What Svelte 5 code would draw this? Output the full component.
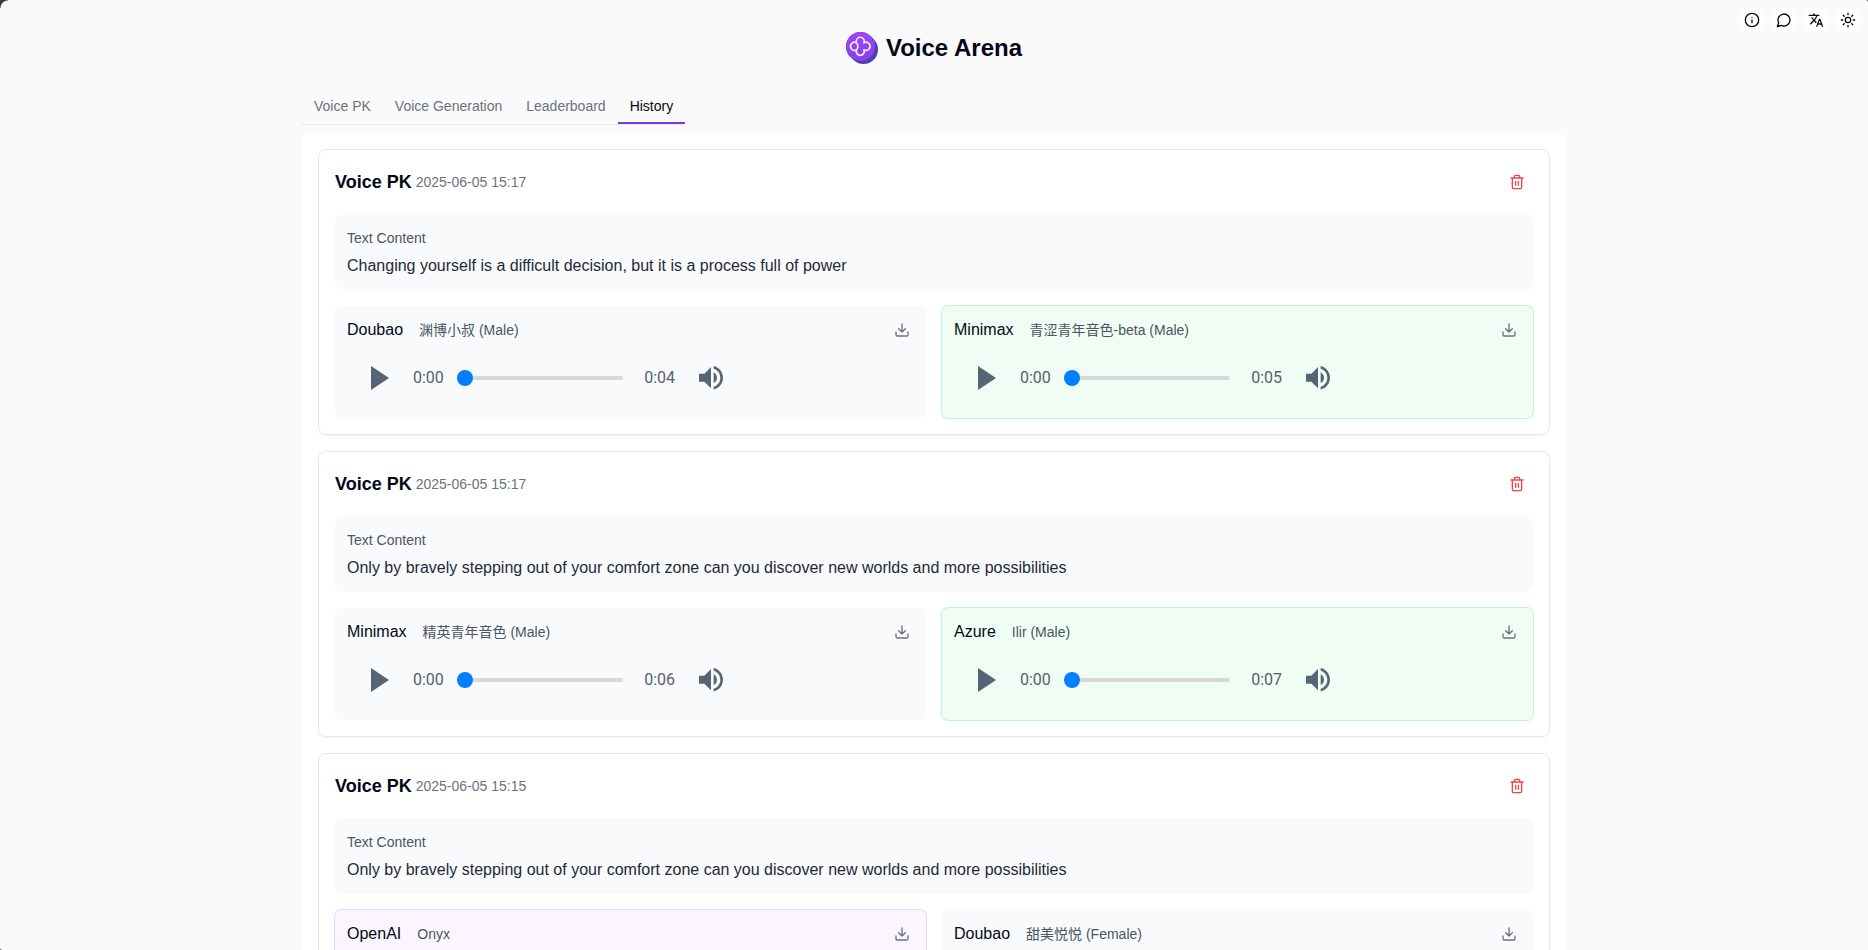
<script>
  const tabs = ['Voice PK', 'Voice Generation', 'Leaderboard', 'History'];
  let active = $state('History');

  const records = [
    {
      time: '2025-06-05 15:17',
      text: 'Changing yourself is a difficult decision, but it is a process full of power',
      voices: [
        { provider: 'Doubao', name: '渊博小叔 (Male)', length: '0:04', tone: '' },
        { provider: 'Minimax', name: '青涩青年音色-beta (Male)', length: '0:05', tone: 'green' }
      ]
    },
    {
      time: '2025-06-05 15:17',
      text: 'Only by bravely stepping out of your comfort zone can you discover new worlds and more possibilities',
      voices: [
        { provider: 'Minimax', name: '精英青年音色 (Male)', length: '0:06', tone: '' },
        { provider: 'Azure', name: 'Ilir (Male)', length: '0:07', tone: 'green' }
      ]
    },
    {
      time: '2025-06-05 15:15',
      text: 'Only by bravely stepping out of your comfort zone can you discover new worlds and more possibilities',
      voices: [
        { provider: 'OpenAI', name: 'Onyx', length: '0:06', tone: 'purple' },
        { provider: 'Doubao', name: '甜美悦悦 (Female)', length: '0:06', tone: '' }
      ]
    }
  ];
</script>

{#snippet icon(name)}
  <svg class="icon" viewBox="0 0 24 24" aria-hidden="true">
    {#if name === 'info'}
      <circle cx="12" cy="12" r="10" /><path d="M12 16v-4M12 8h.01" />
    {:else if name === 'chat'}
      <path d="M7.9 20A9 9 0 1 0 4 16.1L2 22Z" />
    {:else if name === 'language'}
      <path
        class="solid"
        d="M12.87 15.07l-2.54-2.51.03-.03A17.52 17.52 0 0 0 14.07 6H17V4h-7V2H8v2H1v2h11.17C11.5 7.92 10.44 9.75 9 11.35 8.07 10.32 7.3 9.19 6.69 8h-2c.73 1.63 1.73 3.17 2.98 4.56l-5.09 5.02L4 19l5-5 3.11 3.11.76-2.04zM18.5 10h-2L12 22h2l1.12-3h4.75L21 22h2l-4.5-12zm-2.62 7l1.62-4.33L19.12 17h-3.24z"
      />
    {:else if name === 'sun'}
      <circle cx="12" cy="12" r="4" />
      <path d="M12 2v2M12 20v2M4.93 4.93l1.41 1.41M17.66 17.66l1.41 1.41M2 12h2M20 12h2M6.34 17.66l-1.41 1.41M19.07 4.93l-1.41 1.41" />
    {:else if name === 'trash'}
      <path d="M3 6h18M19 6v14a2 2 0 0 1-2 2H7a2 2 0 0 1-2-2V6M8 6V4a2 2 0 0 1 2-2h4a2 2 0 0 1 2 2v2M10 11v6M14 11v6" />
    {:else if name === 'download'}
      <path d="M21 15v4a2 2 0 0 1-2 2H5a2 2 0 0 1-2-2v-4M7 10l5 5 5-5M12 15V3" />
    {/if}
  </svg>
{/snippet}

<div class="page">
  <div class="tools">
    <button aria-label="About">{@render icon('info')}</button>
    <button aria-label="Feedback">{@render icon('chat')}</button>
    <button aria-label="Language">{@render icon('language')}</button>
    <button aria-label="Theme">{@render icon('sun')}</button>
  </div>

  <div class="container">
    <header>
      <svg class="logo" viewBox="0 0 32 32" aria-hidden="true">
        <defs>
          <linearGradient id="face" x1="0" y1="0" x2="0" y2="1">
            <stop offset="0" stop-color="#9b48f2" />
            <stop offset="1" stop-color="#8640ea" />
          </linearGradient>
        </defs>
        <path d="M14.5 14.5L17.5 17.5" stroke="#4f3fb0" stroke-width="29" stroke-linecap="round" />
        <circle cx="14.5" cy="14.5" r="14.5" fill="url(#face)" />
        <path
          d="M10.6 10.9A4 4 0 1 1 17.9 10.9A4 4 0 1 1 17.9 17.7A4 4 0 1 1 10.6 17.7A4 4 0 1 1 10.6 10.9M10.6 10.9Q13.2 14.3 10.6 17.7"
          fill="none"
          stroke="#f3e8ff"
          stroke-width="1.6"
          stroke-linejoin="round"
        />
      </svg>
      <h1>Voice Arena</h1>
    </header>

    <nav>
      {#each tabs as tab}
        <button class:active={tab === active} onclick={() => (active = tab)}>{tab}</button>
      {/each}
    </nav>

    <main>
      {#each records as record}
        <article>
          <div class="head">
            <h2>Voice PK</h2>
            <time>{record.time}</time>
            <button class="delete" aria-label="Delete record">{@render icon('trash')}</button>
          </div>
          <div class="content">
            <div class="label">Text Content</div>
            <p>{record.text}</p>
          </div>
          <div class="voices">
            {#each record.voices as voice}
              <section class={voice.tone}>
                <div class="voice">
                  <span class="provider">{voice.provider}</span>
                  <span class="name">{voice.name}</span>
                  <button class="download" aria-label="Download">{@render icon('download')}</button>
                </div>
                <div class="player">
                  <button class="play" aria-label="Play">
                    <svg width="18" height="24" viewBox="0 0 18 24"><path d="M18 12L0 24V0" /></svg>
                  </button>
                  <div class="controls">
                    <span>0:00</span>
                    <input type="range" min="0" max="100" value="0" aria-label="Playback position" />
                    <span>{voice.length}</span>
                  </div>
                  <button class="volume" aria-label="Volume">
                    <svg width="24" height="24" viewBox="0 0 24 24">
                      <path
                        d="M14.667 0v2.747c3.853 1.146 6.666 4.72 6.666 8.946 0 4.227-2.813 7.787-6.666 8.934v2.76C20 22.173 24 17.4 24 11.693 24 5.987 20 1.213 14.667 0zM18 11.693c0-2.36-1.333-4.386-3.333-5.373v10.707c2-.947 3.333-2.987 3.333-5.334zm-18-4v8h5.333L12 22.36V1.027L5.333 7.693H0z"
                      />
                    </svg>
                  </button>
                </div>
              </section>
            {/each}
          </div>
        </article>
      {/each}
    </main>
  </div>
</div>

<style>
  :global(body) {
    background: #fafafa;
  }
  .page {
    position: relative;
    height: 100vh;
    overflow: hidden;
    background:
      radial-gradient(circle at 100% 100%, transparent 7px, #3a3a3a 8px) 0 0 / 8px 8px no-repeat,
      radial-gradient(circle at 0 100%, transparent 4px, #777 5px) 100% 0 / 4px 4px no-repeat,
      radial-gradient(circle at 100% 0, transparent 4px, #777 5px) 0 100% / 4px 4px no-repeat;
    color: #020817;
    font: 16px/24px 'Liberation Sans', 'Noto Sans CJK SC', sans-serif;
  }
  button {
    display: flex;
    align-items: center;
    justify-content: center;
    margin: 0;
    padding: 0;
    border: 0;
    background: none;
    color: inherit;
    font: inherit;
    cursor: pointer;
  }
  .icon {
    width: 16px;
    height: 16px;
    fill: none;
    stroke: currentColor;
    stroke-width: 2;
    stroke-linecap: round;
    stroke-linejoin: round;
  }
  .solid {
    fill: currentColor;
    stroke: none;
  }
  .tools {
    position: absolute;
    top: 8px;
    right: 8px;
    display: flex;
    gap: 8px;
  }
  .tools button {
    width: 24px;
    height: 24px;
    border-radius: 50%;
    background: #fff;
  }
  .container {
    max-width: 1264px;
    margin: 0 auto;
    padding: 32px 16px;
  }
  header {
    display: flex;
    align-items: center;
    justify-content: center;
    gap: 8px;
    margin-bottom: 24px;
  }
  .logo {
    width: 32px;
    height: 32px;
  }
  h1,
  h2,
  p {
    margin: 0;
  }
  h1 {
    font-size: 24px;
    line-height: 32px;
  }
  nav {
    display: flex;
    width: fit-content;
    margin-bottom: 8px;
    border-bottom: 1px solid #e5e7eb;
  }
  nav button {
    padding: 8px 12px 6px;
    border-bottom: 2px solid transparent;
    color: #6b7280;
    font-size: 14px;
    line-height: 20px;
  }
  nav .active {
    border-color: #7c3aed;
    color: #020817;
  }
  main {
    display: grid;
    gap: 16px;
    padding: 16px;
    border-radius: 8px;
    background: #fff;
  }
  article {
    display: grid;
    gap: 16px;
    padding: 16px;
    border: 1px solid #e5e7eb;
    border-radius: 8px;
    box-shadow: 0 1px 2px rgb(0 0 0 / 5%);
  }
  .head {
    display: flex;
    align-items: center;
    gap: 4px;
  }
  h2 {
    font-size: 18px;
    line-height: 28px;
  }
  time {
    color: #6b7280;
    font-size: 14px;
  }
  .delete {
    width: 32px;
    height: 32px;
    margin-left: auto;
    color: #ef4444;
  }
  .content {
    padding: 12px;
    border-radius: 8px;
    background: #f9fafc;
  }
  .label {
    margin-bottom: 4px;
    color: #4b5563;
    font-size: 14px;
  }
  p {
    color: #1f2937;
  }
  .voices {
    display: grid;
    grid-template-columns: 1fr 1fr;
    gap: 16px;
  }
  section {
    padding: 12px;
    border-radius: 6px;
    background: #f9fafc;
  }
  .green {
    background: #f0fdf4;
    box-shadow: 0 0 0 1px #bbf7d0;
  }
  .purple {
    background: #faf5ff;
    box-shadow: 0 0 0 1px #e9d5ff;
  }
  .voice {
    display: flex;
    align-items: center;
    gap: 16px;
    height: 24px;
    margin-bottom: 8px;
  }
  .name {
    color: #4b5563;
    font-size: 14px;
  }
  .download {
    width: 24px;
    height: 24px;
    margin-left: auto;
    color: #6b7280;
  }
  .player {
    display: flex;
    align-items: center;
    gap: 24px;
    box-sizing: border-box;
    max-width: 400px;
    height: 56px;
    padding: 0 24px;
    color: #55606e;
    font-family: Roboto, sans-serif;
  }
  .player svg {
    display: block;
    fill: #566574;
  }
  .controls {
    display: flex;
    flex: 1;
    align-items: center;
    justify-content: space-between;
  }
  input {
    flex: 1;
    min-width: 0;
    height: 16px;
    margin: 0 21px 0 13px;
    appearance: none;
    background: none;
  }
  input::-webkit-slider-runnable-track {
    height: 4px;
    border-radius: 2px;
    background: #d8d8d8;
  }
  input::-webkit-slider-thumb {
    appearance: none;
    width: 16px;
    height: 16px;
    margin-top: -6px;
    border-radius: 50%;
    background: #007fff;
  }
</style>
